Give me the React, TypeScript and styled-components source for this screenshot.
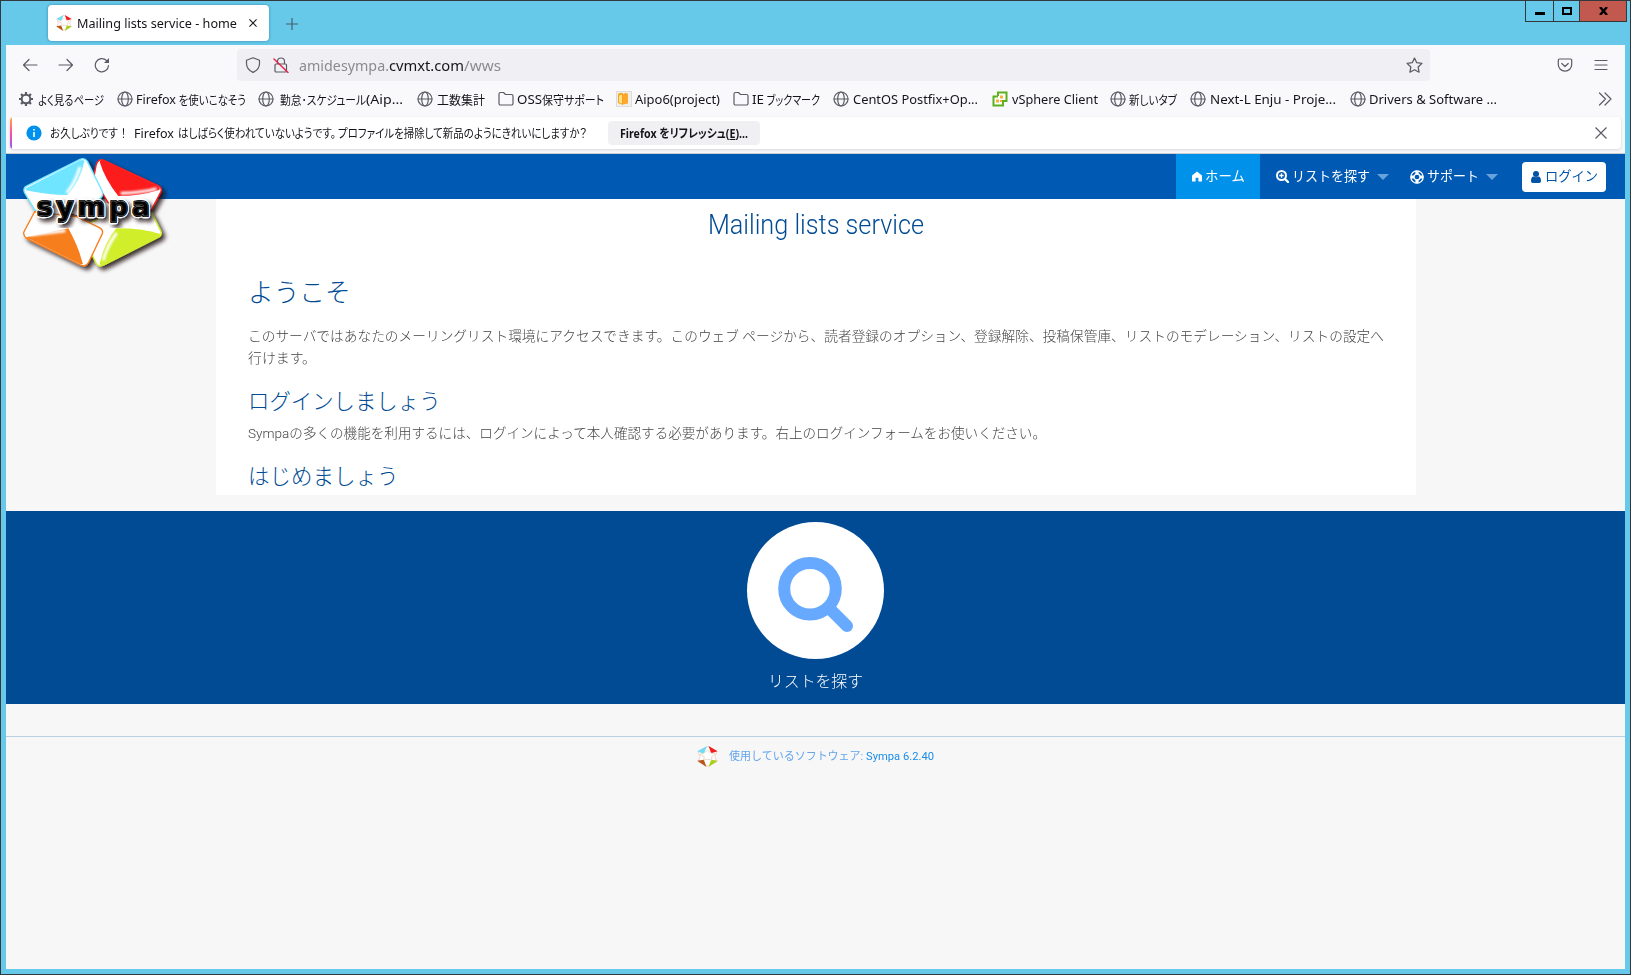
import React, { useLayoutEffect, useRef, useState } from 'react';
import styled, { createGlobalStyle } from 'styled-components';

const GlobalStyle = createGlobalStyle`
  * { box-sizing: border-box; }
  html, body { margin: 0; padding: 0; overflow: hidden; }
  svg { display: block; flex: none; }
`;

const ui = `"Noto Sans", "Noto Sans CJK JP", sans-serif`;
const web = `Roboto, "Noto Sans CJK JP", sans-serif`;

/* ---------- text that fills a fixed measure ---------- */
const Measure = styled.span<{ $w: number }>`
  display: inline-block;
  flex: none;
  width: ${(p) => p.$w}px;
  white-space: pre;
`;
const Stretch = styled.span`
  display: inline-block;
  transform-origin: left center;
`;
function Fit({ w, children, className }: { w: number; children: React.ReactNode; className?: string }) {
  const ref = useRef<HTMLSpanElement>(null);
  const [k, setK] = useState(1);
  useLayoutEffect(() => {
    if (ref.current && ref.current.offsetWidth) {
      const r = ref.current;
      const prev = r.style.transform;
      r.style.transform = 'none';
      setK(w / r.getBoundingClientRect().width);
      r.style.transform = prev;
    }
  }, [w]);
  return (
    <Measure $w={w} className={className}>
      <Stretch ref={ref} style={{ transform: `scaleX(${k})` }}>{children}</Stretch>
    </Measure>
  );
}

/* ---------- window ---------- */
const Window = styled.div`
  width: 1631px;
  height: 975px;
  display: flex;
  flex-direction: column;
  background: #66c9ea;
  border: 1px solid #32383c;
  padding: 0 5px 5px;
  font-family: ${ui};
  color: #15141a;
`;
const TitleBar = styled.div`
  height: 44px;
  flex: none;
  display: flex;
  align-items: flex-start;
  padding-left: 42px;
`;
const Tab = styled.div`
  width: 221px;
  height: 36px;
  margin-top: 4px;
  padding-left: 8px;
  display: flex;
  align-items: center;
  background: #fff;
  border-radius: 4px;
  box-shadow: 0 0 3px rgba(0, 50, 80, 0.45);
  font-size: 13px;
  svg:first-child { margin-right: 5px; }
  svg:last-child { margin-left: 12px; }
`;
const NewTab = styled.div`
  margin: 17px 0 0 17px;
`;
const Controls = styled.div`
  margin: -1px -2px 0 auto;
  display: flex;
  height: 22px;
  border: 1px solid #32383c;
`;
const Control = styled.div<{ $w: number; $close?: boolean; $first?: boolean }>`
  width: ${(p) => p.$w}px;
  display: flex;
  align-items: center;
  justify-content: center;
  background: ${(p) => (p.$close ? '#c1594f' : 'transparent')};
  border-left: ${(p) => (p.$first ? 0 : 1)}px solid #32383c;
`;

/* ---------- browser chrome ---------- */
const Chrome = styled.div`
  height: 109px;
  flex: none;
  background: #f9f9fb;
  border-bottom: 1px solid #cccccf;
`;
const NavBar = styled.div`
  height: 40px;
  display: flex;
  align-items: center;
  padding-left: 16px;
`;
const NavIcons = styled.div`
  width: 215px;
  display: flex;
  gap: 20px;
`;
const UrlBar = styled.div`
  width: 1193px;
  height: 32px;
  display: flex;
  align-items: center;
  padding: 0 7px 0 8px;
  background: #f0f0f4;
  border-radius: 4px;
  font-size: 15px;
  color: #8a8a90;
  svg:nth-child(2) { margin: 0 10px 0 12px; }
  svg:last-child { margin-left: auto; }
`;
const Host = styled(Fit)`
  color: #15141a;
`;
const MenuIcons = styled.div`
  margin-left: auto;
  margin-right: 16px;
  display: flex;
  gap: 20px;
`;
const Bookmarks = styled.div`
  height: 29px;
  padding-bottom: 1px;
  display: flex;
  align-items: center;
  padding-left: 12px;
  font-size: 12.5px;
  > svg:last-child { margin-left: auto; margin-right: 13px; }
`;
const Bookmark = styled.div<{ $w: number; $indent: number }>`
  width: ${(p) => p.$w}px;
  flex: none;
  display: flex;
  align-items: center;
  font-feature-settings: "palt";
  svg { margin-right: ${(p) => p.$indent - 16}px; }
`;
const Notice = styled.div`
  height: 32px;
  margin: 3px 4px 0;
  display: flex;
  align-items: center;
  background: #fff;
  border-radius: 4px;
  box-shadow: 0 1px 3px rgba(58, 57, 68, 0.18);
  font-size: 12px;
  font-feature-settings: "palt";
  overflow: hidden;
  > svg { margin: 0 8px 0 14px; }
  > svg:last-child { margin: 0 14px 0 auto; }
`;
const Stripe = styled.div`
  width: 2px;
  height: 32px;
  background: linear-gradient(#ffb13b, #ff4aa2 50%, #9059ff);
`;
const NoticeText = styled.div<{ $gap: number }>`
  margin-right: ${(p) => p.$gap}px;
`;
const RefreshButton = styled.div`
  width: 152px;
  height: 24px;
  margin-left: 21px;
  display: flex;
  align-items: center;
  justify-content: center;
  background: #f0f0f2;
  border-radius: 4px;
  font-weight: 700;
`;

/* ---------- web page ---------- */
const Page = styled.div`
  position: relative;
  flex: 1;
  display: flex;
  flex-direction: column;
  background: #f7f7f7;
  font-family: ${web};
`;
const TopBar = styled.div`
  height: 45px;
  flex: none;
  display: flex;
  align-items: center;
  justify-content: flex-end;
  padding-right: 19px;
  background: #005ab3;
  color: #fff;
  font-size: 13.6px;
`;
const MenuItem = styled.div<{ $w: number; $pad: number; $gap: number; $active?: boolean }>`
  width: ${(p) => p.$w}px;
  height: 45px;
  display: flex;
  align-items: center;
  padding-left: ${(p) => p.$pad}px;
  background: ${(p) => (p.$active ? '#0091ea' : 'transparent')};
  svg:first-child { margin-right: ${(p) => p.$gap}px; }
  > span { padding-bottom: 3px; }
`;
const Caret = styled.i`
  margin-left: 7px;
  border: 6px solid transparent;
  border-top-color: #68a2dc;
  border-bottom: 0;
`;
const LoginButton = styled.div`
  width: 84px;
  height: 30px;
  padding-left: 9px;
  display: flex;
  align-items: center;
  gap: 4px;
  border-radius: 4px;
  background: #fff;
  color: #0054a8;
  > span { padding-bottom: 3px; }
`;
const Logo = styled.svg`
  position: absolute;
  left: 10px;
  top: -3px;
`;
const Content = styled.div`
  width: 1200px;
  height: 296px;
  flex: none;
  margin: 0 auto 0 210px;
  padding: 0 32px;
  background: #fff;
  color: #444;
  font-size: 13.6px;
  font-weight: 300;
  line-height: 22px;
  overflow: hidden;
`;
const SiteTitle = styled.h1`
  margin: 6px 0 0;
  text-align: center;
  height: 40px;
  font: 300 28px/40px ${web};
  color: #004b94;
`;
const Heading = styled.h2<{ $size: number; $top: number; $h: number }>`
  margin: ${(p) => p.$top}px 0 0;
  height: ${(p) => p.$h}px;
  font: 300 ${(p) => p.$size}px/${(p) => p.$h}px ${web};
  color: #004b94;
`;
const Para = styled.p<{ $top: number }>`
  margin: ${(p) => p.$top}px 0 0;
  > span { display: block; }
`;
const Band = styled.div`
  height: 193px;
  flex: none;
  margin-top: 16px;
  padding-top: 11px;
  display: flex;
  flex-direction: column;
  align-items: center;
  background: #004b94;
  color: #fff;
  font-size: 15.6px;
  font-weight: 300;
`;
const Disc = styled.div`
  width: 137px;
  height: 137px;
  border-radius: 50%;
  background: #fff;
`;
const Caption = styled.div`
  margin-top: 12px;
  line-height: 23px;
`;
const Footer = styled.div`
  margin-top: 32px;
  height: 40px;
  padding-left: 691px;
  display: flex;
  align-items: center;
  gap: 11px;
  border-top: 1px solid #b9cfe2;
  font-size: 11px;
  color: #64a5ec;
  > svg { margin-bottom: 1px; }
  > span { padding-bottom: 4px; }
`;
const Version = styled(Fit)`
  color: #1a8ce8;
`;

/* ---------- icons ---------- */
const line = { fill: 'none', stroke: '#5b5b66', strokeWidth: 1.2, strokeLinecap: 'round' as const, strokeLinejoin: 'round' as const };

const Favicon = ({ size }: { size: number }) => (
  <svg width={size} height={size} viewBox="0 0 20 20">
    <path d="M9 1 1 5 3 10 1 15 9 19 11 19 19 15 17 10 19 5 11 1z" fill="#fff" stroke="#eac9b8" strokeWidth=".8" />
    <path d="M9.500 0 .5 5 6.500 7.500z" fill="#6fdcf8" />
    <path d="M11 0 19.600 5 13.500 7z" fill="#f01c1c" />
    <path d="M.3 14 6.500 13 9 20z" fill="#b8561a" />
    <path d="M19.700 14 13.500 13 11 20z" fill="#a9d018" />
    <path d="M7 6.500 10 4l3 2.500 4 1-3 2.500 0 3.500-4-1-3.500 1 .3-3.500L3 8z" fill="#fff" stroke="#e2bfae" strokeWidth=".6" />
  </svg>
);
const Globe = () => (
  <svg width="16" height="16" viewBox="0 0 16 16" {...line}>
    <circle cx="8" cy="8" r="7" /><ellipse cx="8" cy="8" rx="3.300" ry="7" />
    <path d="M1 8h14" />
  </svg>
);
const Folder = () => (
  <svg width="16" height="16" viewBox="0 0 16 16" {...line}>
    <path d="M1 4V3a1.500 1.500 0 0 1 1.500-1.500h3L7.500 3.500h6A1.500 1.500 0 0 1 15 5v7.500a1.500 1.500 0 0 1-1.500 1.500h-11A1.500 1.500 0 0 1 1 12.500z" />
  </svg>
);
const Gear = () => (
  <svg width="16" height="16" viewBox="0 0 16 16" fill="none" stroke="#5b5b66">
    <circle cx="8" cy="8" r="4.300" strokeWidth="2" />
    <path d="M8 1v2.500M8 12.500V15M1 8h2.500M12.500 8H15M3.050 3.050l1.800 1.800M11.150 11.150l1.800 1.800M12.950 3.050l-1.800 1.800M4.850 11.150l-1.800 1.800" strokeWidth="2.200" />
  </svg>
);
const Aipo = () => (
  <svg width="16" height="16" viewBox="0 0 16 16">
    <rect x=".5" y=".5" width="15" height="15" fill="#f1efec" stroke="#deddda" />
    <path d="M2 3.500Q2 2 4 2h3v12l-5-2z" fill="#f9a11b" /><path d="M3 4.500 6 3.500v9l-3-1z" fill="#ffe08a" />
    <path d="M7 3.500Q10 1 12 3v9.500l-5 1z" fill="#fba92c" />
  </svg>
);
const Sphere = () => (
  <svg width="16" height="16" viewBox="0 0 16 16">
    <path d="M6 5V1.500h8.500V10H11v4.500H1.500V5.500H6" fill="#fff" stroke="#5db01e" strokeWidth="2" />
    <path d="M8 4.500h3v3H8zM4 8.500h3v3H4z" fill="#fbb034" /><path d="M8 9h2v2H8z" fill="#fbb034" />
  </svg>
);

function SympaLogo() {
  const parts = [
    { c: '#fd1b1e', o: 'M281 100 288 62Q294 38 312 46L474 122q13 7 9 18l-28 53-115 6z', f: 'M304 43 474 123q9 6 3 12-56 18-122 18-40-50-56-103z' },
    { c: '#d0ee2a', o: 'M272 234 340 200 456 205 483 260q3 10-6 16L312 360q-18 8-24-6L278 333z', f: 'M349 250q68-1 130 16 5 5-2 10L310 360q-9 4-11-4 13-62 50-106z' },
    { c: '#70e5ff', o: 'M82 122 240 43q14-6 22 6l44 88q5 12-4 22l-52 31-145 6-32-54q-5-14 9-20z', f: 'M78 130 238 47q14-5 15 2-12 60-51 101-60 0-124-14z' },
    { c: '#f77e1e', o: 'M80 280q-12-8-8-20l32-60 126 15 68 33q14 8 8 20l-40 84q-8 16-24 8z', f: 'M78 277 205 250q30 54 44 108l-9-1z' },
  ];
  return (
    <Logo width="170" height="130" viewBox="48 18 510 390">
      <defs>
        <filter id="shade" x="-10%" y="-10%" width="130%" height="130%">
          <feDropShadow dx="10" dy="10" stdDeviation="7" floodColor="#20100c" floodOpacity=".85" />
        </filter>
        <filter id="soft"><feGaussianBlur stdDeviation="3" /></filter>
      </defs>
      <g filter="url(#shade)">
        {parts.map((p) => (
          <g key={p.c}>
            <path d={p.o} fill="#fff" stroke={p.c} strokeWidth="4" />
            <path d={p.f} fill={p.c} />
          </g>
        ))}
        <path d="M120 182 270 172 430 182 430 206 330 214 262 222 220 206 120 206z" fill="#fff" />
      </g>
      <g fill="none" stroke="#fff" strokeWidth="9" filter="url(#soft)">
        <path d="M240 66Q226 114 200 144" /><path d="M362 145q60-1 108-14" />
        <path d="M90 270 196 257" /><path d="M350 264q-30 40-40 82" />
      </g>
      <g fontFamily="DejaVu Sans" fontWeight="700" fontSize="80" strokeLinejoin="round">
        <text x="110" y="212" textLength="340" lengthAdjust="spacing" fill="#fff" stroke="#fff" strokeWidth="13" filter="url(#shade)">sympa</text>
        <text x="110" y="212" textLength="340" lengthAdjust="spacing" fill="#000" stroke="#000" strokeWidth="6">sympa</text>
        <text x="110" y="212" textLength="340" lengthAdjust="spacing" fill="none" stroke="#999" strokeWidth="1">sympa</text>
      </g>
    </Logo>
  );
}

const bookmarks: { x: number; t: number; label: [string, number][]; icon: React.ReactNode }[] = [
  { x: 18, t: 38, label: [['よく見るページ', 66]], icon: <Gear /> },
  { x: 116.5, t: 136, label: [['Firefox', 40], [' を使いこなそう', 70]], icon: <Globe /> },
  { x: 257.5, t: 280, label: [['勤怠･スケジュール', 86], ['(Aip...', 37]], icon: <Globe /> },
  { x: 417, t: 437, label: [['工数集計', 48]], icon: <Globe /> },
  { x: 497.5, t: 517, label: [['OSS', 25], ['保守サポート', 62]], icon: <Folder /> },
  { x: 616, t: 635, label: [['Aipo6(project)', 85]], icon: <Aipo /> },
  { x: 732.5, t: 752, label: [['IE', 12], [' ブックマーク', 56]], icon: <Folder /> },
  { x: 832.5, t: 853, label: [['CentOS Postfix+Op...', 125]], icon: <Globe /> },
  { x: 991.5, t: 1012, label: [['vSphere Client', 86]], icon: <Sphere /> },
  { x: 1109.5, t: 1129, label: [['新しいタブ', 48]], icon: <Globe /> },
  { x: 1189.5, t: 1210, label: [['Next-L Enju - Proje...', 126]], icon: <Globe /> },
  { x: 1349.5, t: 1369, label: [['Drivers & Software ...', 128]], icon: <Globe /> },
];

export default function App() {
  return (
    <>
      <GlobalStyle />
      <Window>
        <TitleBar>
          <Tab>
            <Favicon size={16} />
            <Fit w={160}>Mailing lists service - home</Fit>
            <svg width="8" height="8" viewBox="0 0 9 9" stroke="#15141a" strokeWidth="1.200"><path d="M.5.5l8 8M8.500.5l-8 8" /></svg>
          </Tab>
          <NewTab><svg width="12" height="12" viewBox="0 0 12 12" stroke="#46616e" strokeWidth="1.200"><path d="M6 0v12M0 6h12" /></svg></NewTab>
          <Controls>
            <Control $w={27} $first><svg width="10" height="10" viewBox="0 0 10 10"><path d="M0 6h10v3H0z" /></svg></Control>
            <Control $w={26}><svg width="10" height="8" viewBox="0 0 10 8"><path d="M1 1h8v6H1z" fill="none" stroke="#000" strokeWidth="2" /></svg></Control>
            <Control $w={47} $close><svg width="9" height="8" viewBox="0 0 9 8"><path d="M1 0l7 8M8 0 1 8" stroke="#000" strokeWidth="2.400" /></svg></Control>
          </Controls>
        </TitleBar>

        <Chrome>
          <NavBar>
            <NavIcons>
              <svg width="16" height="16" viewBox="0 0 16 16" {...line}><path d="M15 8H1.500M7 2.500 1.500 8 7 13.500" /></svg>
              <svg width="16" height="16" viewBox="0 0 16 16" {...line}><path d="M1 8h13.500M9 2.500 14.500 8 9 13.500" /></svg>
              <svg width="16" height="16" viewBox="0 0 16 16" {...line}><path d="M14.500 8.500A6.600 6.600 0 1 1 12.500 3.500" /><path d="M15 1v5h-5z" fill="#5b5b66" stroke="none" /></svg>
            </NavIcons>
            <UrlBar>
              <svg width="16" height="16" viewBox="0 0 16 16" {...line}><path d="M8 .8 14.500 3.300v3.200c0 4-2.300 7-6.500 8.900-4.200-1.900-6.500-4.900-6.500-8.900V3.300z" /></svg>
              <svg width="16" height="16" viewBox="0 0 16 16" {...line}><path d="M4.500 7V4.500a3.500 3.500 0 0 1 7 0V7M3 7h9.500a1 1 0 0 1 1 1v6a1 1 0 0 1-1 1H3a1 1 0 0 1-1-1V8a1 1 0 0 1 1-1z" /><path d="M1 2l14 13.500" stroke="#e22850" strokeWidth="1.500" /></svg>
              <Fit w={90}>amidesympa.</Fit><Host w={75}>cvmxt.com</Host><Fit w={37}>/wws</Fit>
              <svg width="17" height="17" viewBox="0 0 16 16" {...line}><path d="M8 1 10.100 5.400 15 6l-3.600 3.400.9 4.900L8 12l-4.300 2.300.9-4.900L1 6l4.900-.6z" /></svg>
            </UrlBar>
            <MenuIcons>
              <svg width="16" height="16" viewBox="0 0 16 16" {...line}><path d="M2.500 2h11A1.200 1.200 0 0 1 14.700 3.200V7.500a6.700 6.700 0 0 1-13.400 0V3.200A1.200 1.200 0 0 1 2.500 2zM4.800 6.500 8 9.500l3.200-3" /></svg>
              <svg width="16" height="16" viewBox="0 0 16 16" {...line}><path d="M2 3.500h12M2 8h12M2 12.500h12" /></svg>
            </MenuIcons>
          </NavBar>
          <Bookmarks>
            {bookmarks.map((b, i) => (
              <Bookmark key={b.x} $w={(bookmarks[i + 1]?.x ?? 1500) - b.x} $indent={b.t - b.x}>
                {b.icon}{b.label.map(([text, w]) => <Fit key={text} w={w}>{text}</Fit>)}
              </Bookmark>
            ))}
            <svg width="14" height="14" viewBox="0 0 14 14" {...line}><path d="M1.500 1l6 6-6 6M7 1l6 6-6 6" /></svg>
          </Bookmarks>
          <Notice>
            <Stripe />
            <svg width="16" height="16" viewBox="0 0 16 16"><circle cx="8" cy="8" r="7.600" fill="#0090ed" /><path d="M8 7v5M8 4v1.600" stroke="#fff" strokeWidth="1.600" /></svg>
            <NoticeText $gap={8}><Fit w={68}>お久しぶりです</Fit> <Fit w={5}>！</Fit></NoticeText>
            <NoticeText $gap={4}><Fit w={40}>Firefox</Fit></NoticeText>
            <NoticeText $gap={2}><Fit w={158}>はしばらく使われていないようです。</Fit></NoticeText>
            <NoticeText $gap={0}><Fit w={249}>プロファイルを掃除して新品のようにきれいにしますか？</Fit></NoticeText>
            <RefreshButton><Fit w={128}>Firefox をリフレッシュ(<u>E</u>)...</Fit></RefreshButton>
            <svg width="12" height="12" viewBox="0 0 12 12" stroke="#5b5b66" strokeWidth="1.200"><path d="M.5.5l11 11M11.500.5l-11 11" /></svg>
          </Notice>
        </Chrome>

        <Page>
          <TopBar>
            <MenuItem $w={84} $pad={16} $gap={3} $active>
              <svg width="10" height="11" viewBox="0 0 11 11"><path d="M5.500 0 11 4.500V11H7V7H4v4H0V4.500z" fill="#fff" /></svg>
              <Fit w={40}>ホーム</Fit>
            </MenuItem>
            <MenuItem $w={134} $pad={16} $gap={3}>
              <svg width="13" height="13" viewBox="0 0 13 13" fill="none" stroke="#fff"><circle cx="5.500" cy="5.500" r="4.500" strokeWidth="2" /><path d="M9 9l3 3" strokeWidth="2.400" strokeLinecap="round" /><path d="M3.300 5.500h4.400M5.500 3.300v4.400" strokeWidth="1.300" /></svg>
              <Fit w={78}>リストを探す</Fit><Caret />
            </MenuItem>
            <MenuItem $w={128} $pad={16} $gap={3}>
              <svg width="14" height="14" viewBox="0 0 14 14" fill="none" stroke="#fff"><circle cx="7" cy="7" r="6.200" strokeWidth="1.300" /><circle cx="7" cy="7" r="3" strokeWidth="1.300" /><path d="M7 .8V4M7 10v3.200M.8 7H4M10 7h3.200" strokeWidth="3.200" /></svg>
              <Fit w={52}>サポート</Fit><Caret />
            </MenuItem>
            <LoginButton>
              <svg width="10" height="12" viewBox="0 0 10 12" fill="#0054a8"><circle cx="5" cy="3" r="3" /><path d="M0 10c0-3 1-4.500 2.500-4.500 1.500 1 3.500 1 5 0C9 5.500 10 7 10 10c0 1.300-.7 2-2 2H2c-1.300 0-2-.7-2-2z" /></svg>
              <Fit w={53}>ログイン</Fit>
            </LoginButton>
          </TopBar>
          <Content>
            <SiteTitle><Fit w={216}>Mailing lists service</Fit></SiteTitle>
            <Heading $size={25.7} $top={28} $h={40}>ようこそ</Heading>
            <Para $top={12}>
              <Fit w={1136}>このサーバではあなたのメーリングリスト環境にアクセスできます。このウェブ ページから、読者登録のオプション、登録解除、投稿保管庫、リストのモデレーション、リストの設定へ</Fit>
              <Fit w={68}>行けます。</Fit>
            </Para>
            <Heading $size={21.4} $top={18} $h={30}>ログインしましょう</Heading>
            <Para $top={5}><Fit w={798}>Sympaの多くの機能を利用するには、ログインによって本人確認する必要があります。右上のログインフォームをお使いください。</Fit></Para>
            <Heading $size={21.5} $top={18} $h={30}>はじめましょう</Heading>
          </Content>
          <Band>
            <Disc>
              <svg width="137" height="137" viewBox="0 0 137 137" fill="none" stroke="#66a9ff">
                <circle cx="63" cy="66.800" r="25.800" strokeWidth="12" /><path d="M82 86l18 18" strokeWidth="12" strokeLinecap="round" />
              </svg>
            </Disc>
            <Caption><Fit w={95}>リストを探す</Fit></Caption>
          </Band>
          <Footer>
            <Favicon size={21} />
            <span><Fit w={137}>使用しているソフトウェア: </Fit><Version w={68}>Sympa 6.2.40</Version></span>
          </Footer>
          <SympaLogo />
        </Page>
      </Window>
    </>
  );
}
